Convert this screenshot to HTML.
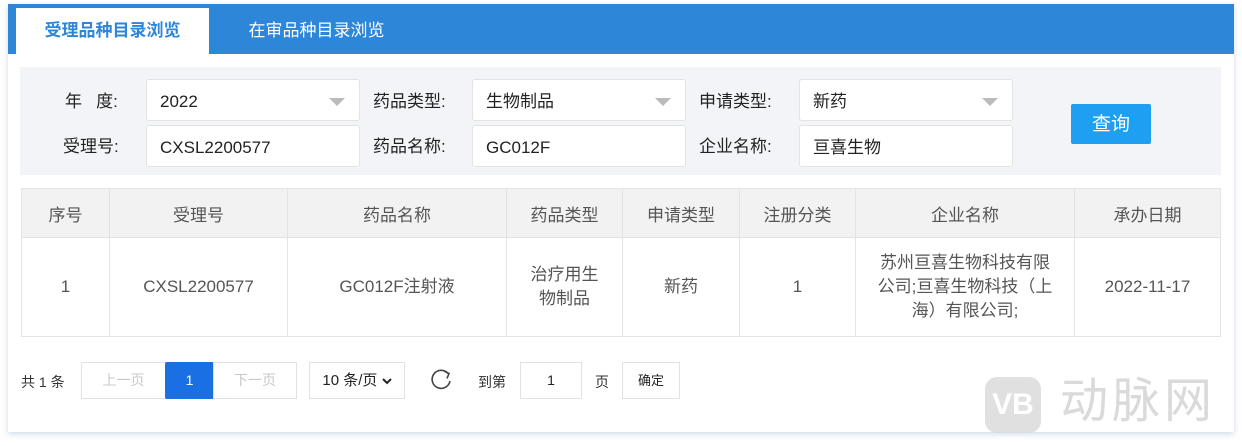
<!DOCTYPE html>
<html><head><meta charset="utf-8"><style>
*{box-sizing:border-box;margin:0;padding:0}
body{width:1242px;height:446px;background:#fff;font-family:"Liberation Sans","Noto Sans CJK SC",sans-serif;position:relative;overflow:hidden;color:#333}
.a{position:absolute}
.card{left:8px;top:4px;width:1226px;height:428px;background:#fff;box-shadow:0 2px 6px rgba(120,150,190,.35)}
.bar{left:8px;top:4px;width:1226px;height:50px;background:#2d86d8}
.tab1{left:16px;top:8px;width:193px;height:46px;background:#fff;color:#2d86d8;font-size:17px;font-weight:bold;text-align:center;line-height:46px}
.tab2{left:209px;top:8px;width:215px;height:46px;color:#fff;font-size:17px;text-align:center;line-height:46px}
.filter{left:20px;top:67px;width:1201px;height:108px;background:#f2f4f7}
.lbl{font-size:17px;color:#222;line-height:44px;height:42px}
.inp{background:#fff;border:1px solid #e3e3e3;border-radius:3px;height:42px;line-height:43px;padding-left:13px;font-size:17px;color:#222}
.tri{position:absolute;right:14px;top:18px;width:0;height:0;border-left:8px solid transparent;border-right:8px solid transparent;border-top:8px solid #bbb}
.btn{left:1071px;top:104px;width:80px;height:40px;background:#1e9ff2;color:#fff;border-radius:2px;font-size:19px;text-align:center;line-height:42px}
table{position:absolute;left:21px;top:188px;width:1200px;border-collapse:collapse;font-size:17px;color:#555}
td,th{border:1px solid #e3e3e3;text-align:center;font-weight:normal}
th{background:#f2f2f2;height:49px}
td{height:99px;line-height:24px}
.pg{font-size:14px;color:#333}
.pb{border:1px solid #e2e2e2;height:37px;line-height:35px;text-align:center;font-size:14px;background:#fff}
</style></head><body>
<div class="a card"></div>
<div class="a bar"></div>
<div class="a tab1">受理品种目录浏览</div>
<div class="a tab2">在审品种目录浏览</div>
<div class="a filter"></div>
<div class="a lbl" style="left:65px;top:80px">年&nbsp;&nbsp;&nbsp;度:</div>
<div class="a lbl" style="left:63px;top:125px">受理号:</div>
<div class="a lbl" style="left:373px;top:80px">药品类型:</div>
<div class="a lbl" style="left:373px;top:125px">药品名称:</div>
<div class="a lbl" style="left:699px;top:80px">申请类型:</div>
<div class="a lbl" style="left:699px;top:125px">企业名称:</div>
<div class="a inp" style="left:146px;top:79px;width:214px">2022<span class="tri"></span></div>
<div class="a inp" style="left:146px;top:125px;width:214px">CXSL2200577</div>
<div class="a inp" style="left:472px;top:79px;width:214px">生物制品<span class="tri"></span></div>
<div class="a inp" style="left:472px;top:125px;width:214px">GC012F</div>
<div class="a inp" style="left:799px;top:79px;width:214px">新药<span class="tri"></span></div>
<div class="a inp" style="left:799px;top:125px;width:214px">亘喜生物</div>
<div class="a btn">查询</div>
<table><tr><th style="width:88px">序号</th><th style="width:178px">受理号</th><th style="width:219px">药品名称</th><th style="width:116px">药品类型</th><th style="width:117px">申请类型</th><th style="width:116px">注册分类</th><th style="width:219px">企业名称</th><th>承办日期</th></tr>
<tr><td>1</td><td>CXSL2200577</td><td>GC012F注射液</td><td>治疗用生<br>物制品</td><td>新药</td><td>1</td><td>苏州亘喜生物科技有限<br>公司;亘喜生物科技（上<br>海）有限公司;</td><td>2022-11-17</td></tr></table>
<div class="a pg" style="left:21px;top:372px">共 1 条</div>
<div class="a pb" style="left:81px;top:362px;width:85px;color:#c8c8c8">上一页</div>
<div class="a pb" style="left:165px;top:362px;width:49px;background:#1a6fe3;border-color:#1a6fe3;color:#fff;border-radius:2px">1</div>
<div class="a pb" style="left:213px;top:362px;width:84px;color:#c8c8c8">下一页</div>
<div class="a pb" style="left:309px;top:362px;width:96px;color:#222;font-size:15px">10 条/页 <svg width="10" height="8" viewBox="0 0 10 8"><path d="M1 2L5 6L9 2" fill="none" stroke="#222" stroke-width="2"/></svg></div>
<svg class="a" style="left:430px;top:369px" width="24" height="22" viewBox="0 0 24 22"><path d="M18 4.5A9 9 0 1 0 20 12" fill="none" stroke="#444" stroke-width="1.6"/><path d="M14 2 L19 4.5 L17 9.5" fill="none" stroke="#444" stroke-width="1.6"/></svg>
<div class="a pg" style="left:478px;top:372px">到第</div>
<div class="a pb" style="left:520px;top:362px;width:62px;color:#222">1</div>
<div class="a pg" style="left:595px;top:372px">页</div>
<div class="a pb" style="left:622px;top:362px;width:58px;color:#222;font-size:13px">确定</div>
<div class="a" style="left:985px;top:377px;width:56px;height:56px;border-radius:12px;background:#d9d9d9;color:#fff;font-weight:bold;font-size:30px;text-align:center;line-height:56px;opacity:.8">VB</div>
<div class="a" style="left:1060px;top:372px;font-size:48px;color:#dadada;letter-spacing:4px;line-height:60px">动脉网</div>
</body></html>
